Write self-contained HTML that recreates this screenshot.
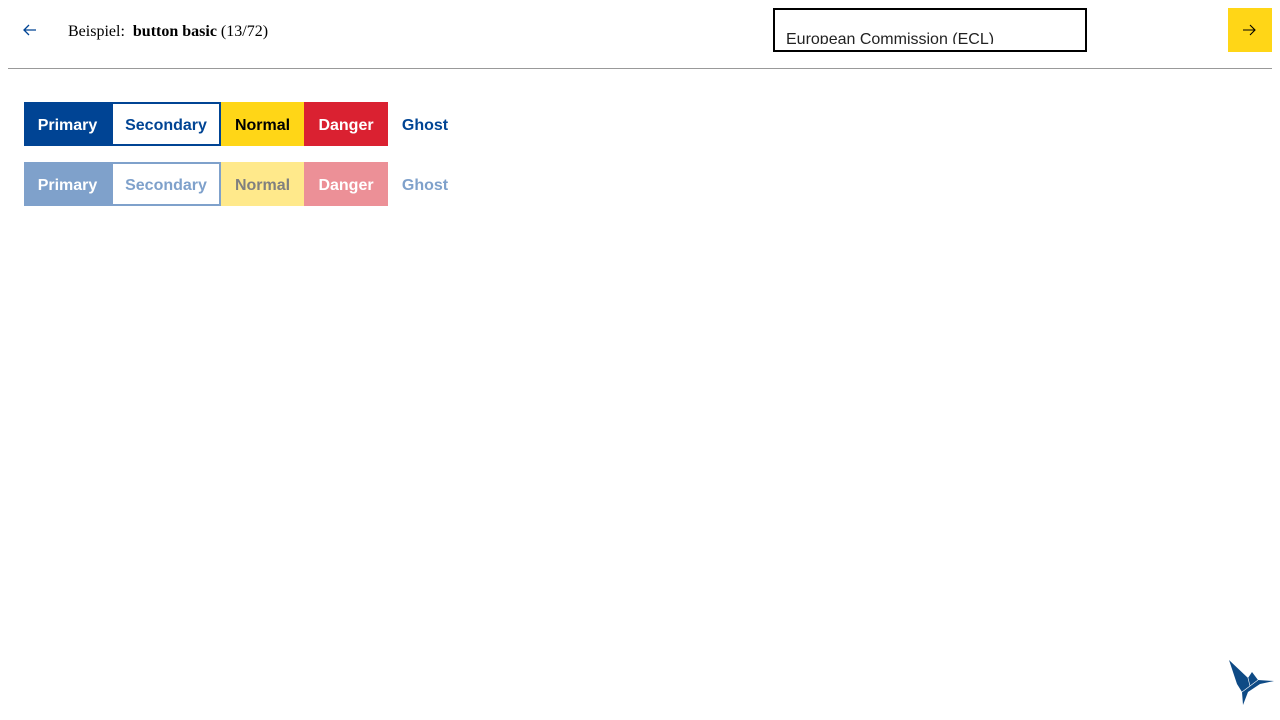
<!DOCTYPE html>
<html><head><meta charset="utf-8"><style>
body{margin:0;width:1280px;height:720px;background:#fff;position:relative;overflow:hidden;font-family:"Liberation Sans",Arial,sans-serif}
.abs{position:absolute}
.title{left:68px;top:23px;font-family:"Liberation Serif",serif;font-size:16px;color:#000}
.hr{left:8px;top:68px;width:1264px;height:1px;background:#999}
.sel{left:773px;top:8px;width:310px;height:40px;border:2px solid #000;overflow:hidden}
.sel div{position:absolute;left:0;top:0;width:310px;height:34px;overflow:hidden}
.sel span{position:absolute;left:11px;top:21px;font-size:16px;color:#222;white-space:nowrap}
.go{left:1228px;top:8px;width:44px;height:44px;background:#ffd617}
.b{position:absolute;height:44px;box-sizing:border-box;padding-top:3px;font-weight:bold;font-size:16px;display:flex;align-items:center;justify-content:center}
</style></head><body>
<svg class="abs" style="left:22px;top:23px" width="16" height="14" viewBox="0 0 16 14"><path d="M14 7H2M7 2L2 7l5 5" fill="none" stroke="#004494" stroke-width="1.3"/></svg>
<div class="abs title">Beispiel:&nbsp; <b>button basic</b> (13/72)</div>
<div class="abs sel"><div><span>European Commission (ECL)</span></div></div>
<div class="abs go"><svg style="position:absolute;left:14px;top:16px" width="14" height="12" viewBox="0 0 14 12"><path d="M1 6h12M8 1l5 5-5 5" fill="none" stroke="#000" stroke-width="1.1"/></svg></div>
<div class="abs hr"></div>

<div class="b" style="left:24px;top:102px;width:87px;background:#004494;color:#fff">Primary</div>
<div class="b" style="left:111px;top:102px;width:110px;border:2px solid #004494;color:#004494">Secondary</div>
<div class="b" style="left:221px;top:102px;width:83px;background:#ffd617;color:#000">Normal</div>
<div class="b" style="left:304px;top:102px;width:84px;background:#da2131;color:#fff">Danger</div>
<div class="b" style="left:388px;top:102px;width:74px;color:#004494">Ghost</div>

<div class="b" style="left:24px;top:162px;width:87px;background:#7fa1cb;color:#fff">Primary</div>
<div class="b" style="left:111px;top:162px;width:110px;border:2px solid #7fa1cb;color:#7fa1cb">Secondary</div>
<div class="b" style="left:221px;top:162px;width:83px;background:#ffe98b;color:#808080">Normal</div>
<div class="b" style="left:304px;top:162px;width:84px;background:#ec9097;color:#fff">Danger</div>
<div class="b" style="left:388px;top:162px;width:74px;color:#7fa1cb">Ghost</div>

<svg class="abs" style="left:1226px;top:658px" width="50" height="50" viewBox="0 0 50 50">
<path d="M3 2L22 20L26 14L32 22L48 23L34 26L22 34L17 47L16 34L11 26Z" fill="#0e4a85"/>
<path d="M22 20L24 28L32 22M16 34L24 28" fill="none" stroke="#fff" stroke-width="0.6"/>
</svg>
</body></html>
